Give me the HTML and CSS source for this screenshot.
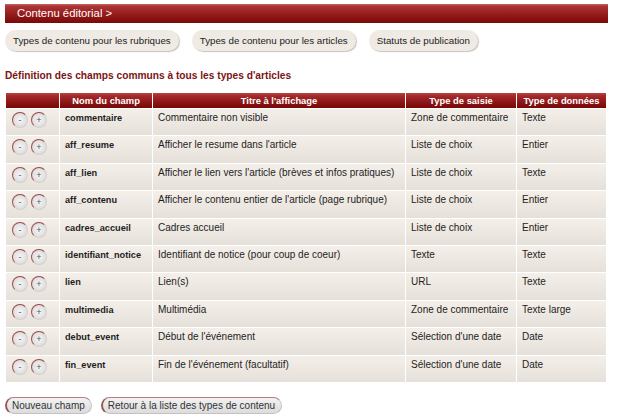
FILE: index.html
```html
<!DOCTYPE html>
<html lang="fr">
<head>
<meta charset="utf-8">
<title>Contenu éditorial</title>
<link rel="stylesheet" href="styles.css">
</head>
<body>
<div class="page">
  <div class="titlebar">Contenu éditorial &gt;</div>
  <div class="tabs">
    <a class="tab">Types de contenu pour les rubriques</a>
    <a class="tab">Types de contenu pour les articles</a>
    <a class="tab">Statuts de publication</a>
  </div>
  <h2 class="heading">Définition des champs communs à tous les types d'articles</h2>
  <table class="grid">
    <colgroup>
      <col class="c1"><col class="c2"><col class="c3"><col class="c4"><col class="c5">
    </colgroup>
    <thead>
      <tr><th></th><th>Nom du champ</th><th>Titre à l'affichage</th><th>Type de saisie</th><th>Type de données</th></tr>
    </thead>
    <tbody>
      <tr><td class="ops"><span class="rb">-</span><span class="rb">+</span></td><td class="name">commentaire</td><td>Commentaire non visible</td><td>Zone de commentaire</td><td>Texte</td></tr>
      <tr><td class="ops"><span class="rb">-</span><span class="rb">+</span></td><td class="name">aff_resume</td><td>Afficher le resume dans l'article</td><td>Liste de choix</td><td>Entier</td></tr>
      <tr><td class="ops"><span class="rb">-</span><span class="rb">+</span></td><td class="name">aff_lien</td><td>Afficher le lien vers l'article (brèves et infos pratiques)</td><td>Liste de choix</td><td>Texte</td></tr>
      <tr><td class="ops"><span class="rb">-</span><span class="rb">+</span></td><td class="name">aff_contenu</td><td>Afficher le contenu entier de l'article (page rubrique)</td><td>Liste de choix</td><td>Entier</td></tr>
      <tr><td class="ops"><span class="rb">-</span><span class="rb">+</span></td><td class="name">cadres_accueil</td><td>Cadres accueil</td><td>Liste de choix</td><td>Entier</td></tr>
      <tr><td class="ops"><span class="rb">-</span><span class="rb">+</span></td><td class="name">identifiant_notice</td><td>Identifiant de notice (pour coup de coeur)</td><td>Texte</td><td>Texte</td></tr>
      <tr><td class="ops"><span class="rb">-</span><span class="rb">+</span></td><td class="name">lien</td><td>Lien(s)</td><td>URL</td><td>Texte</td></tr>
      <tr><td class="ops"><span class="rb">-</span><span class="rb">+</span></td><td class="name">multimedia</td><td>Multimédia</td><td>Zone de commentaire</td><td>Texte large</td></tr>
      <tr><td class="ops"><span class="rb">-</span><span class="rb">+</span></td><td class="name">debut_event</td><td>Début de l'événement</td><td>Sélection d'une date</td><td>Date</td></tr>
      <tr><td class="ops"><span class="rb">-</span><span class="rb">+</span></td><td class="name">fin_event</td><td>Fin de l'événement (facultatif)</td><td>Sélection d'une date</td><td>Date</td></tr>
    </tbody>
  </table>
  <div class="actions">
    <a class="btn">Nouveau champ</a>
    <a class="btn">Retour à la liste des types de contenu</a>
  </div>
</div>
</body>
</html>
```
FILE: styles.css
```css
html, body { margin: 0; padding: 0; background: #fff; }
body { font-family: "Liberation Sans", Arial, sans-serif; color: #222; }
.page { padding: 4px 22px 0 5px; }

.titlebar {
  height: 19px;
  line-height: 18px;
  padding-left: 12px;
  color: #fff;
  font-size: 11.3px;
  background: linear-gradient(#c56a6a 0, #ad3535 2px, #951b1b 55%, #7a0808 100%);
}

.tabs { display: flex; gap: 13px; margin-top: 7px; }
.tab {
  display: block;
  height: 21px;
  line-height: 21px;
  padding: 0 8px;
  border-radius: 11px;
  font-size: 9.75px;
  color: #222;
  background: #efebe4;
  box-shadow: 1px 1px 1px #c9c4bd;
}

.heading {
  margin: 19px 0 0 0;
  font-size: 10.2px;
  font-weight: bold;
  color: #7a1414;
  line-height: 12px;
}

.grid {
  margin-top: 10px;
  border-collapse: separate;
  border-spacing: 1px;
  table-layout: fixed;
  width: 602px;
  font-size: 10px;
  color: #1e1e1e;
}
.c1 { width: 53px; } .c2 { width: 92px; } .c3 { width: 252px; } .c4 { width: 110px; } .c5 { width: 89px; }

.grid th {
  height: 15px;
  padding: 0;
  font-size: 9.4px;
  font-weight: bold;
  color: #fff;
  text-align: center;
  white-space: nowrap;
  background: linear-gradient(#b84444 0, #a32a2a 3px, #8d1616 60%, #780808 100%);
}
.grid td {
  height: 19.4px;
  padding: 3px 2px 4px 5px;
  vertical-align: top;
  line-height: 12px;
  white-space: nowrap;
  overflow: hidden;
  background: linear-gradient(#f4efe9, #e6e0da);
}
.grid td.name { font-weight: bold; font-size: 9.2px; }
.grid td.ops { padding: 3px 0 0 6px; }

.rb {
  display: inline-block;
  box-sizing: border-box;
  width: 16px; height: 16px;
  margin-right: 3px;
  border-radius: 50%;
  border: 1px solid #d6cfcf;
  border-top-color: #9a4646;
  border-left-color: #a14d4d;
  background: radial-gradient(circle at 50% 50%, #f6f6f6 0, #e3e3e3 55%, #cfcfcf 100%);
  color: #555;
  font-size: 9px;
  line-height: 14px;
  text-align: center;
  vertical-align: top;
}

.actions { display: flex; gap: 9px; margin-top: 14px; }
.btn {
  display: block;
  box-sizing: border-box;
  height: 17px;
  line-height: 15px;
  padding: 0 6px 0 5px;
  border-radius: 9px;
  border: 1px solid #c9c1c1;
  border-left: 2px solid #9a5a5a;
  border-top-color: #b08080;
  font-size: 10px;
  color: #333;
  background: linear-gradient(#f2f2f2, #dcdcdc);
}
```
